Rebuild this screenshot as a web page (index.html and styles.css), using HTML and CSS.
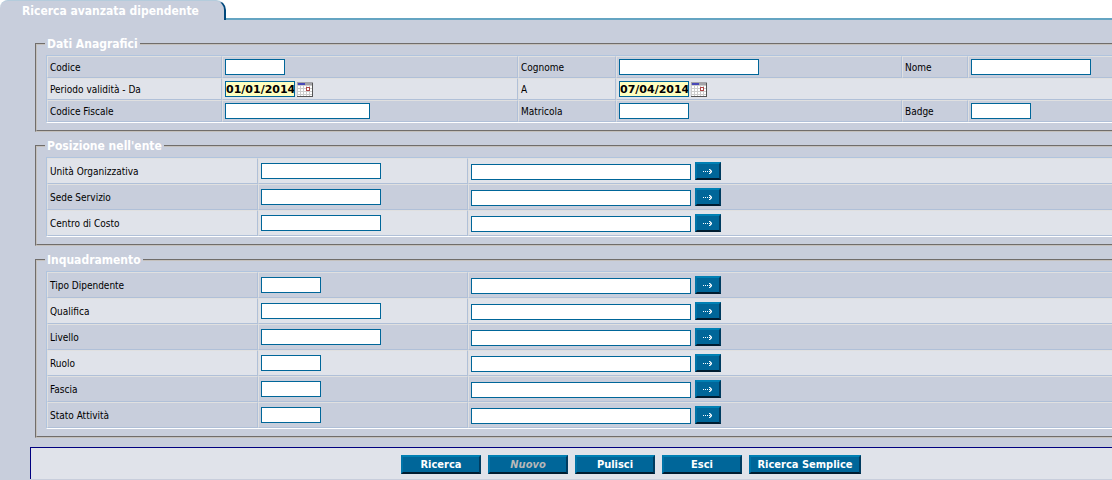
FILE: index.html
```
<!DOCTYPE html>
<html lang="it">
<head>
<meta charset="utf-8">
<title>Ricerca avanzata dipendente</title>
<link rel="stylesheet" href="styles.css">
</head>
<body>
<svg class="symbols" aria-hidden="true">
  <symbol id="arrow" viewBox="0 0 10 5">
    <path d="M0 2h1v1h-1zM2 2h1v1h-1zM4 2h1v1h-1zM6 0h1v1h-1zM7 1h1v1h-1zM6 2h1v1h-1zM8 2h1v1h-1zM7 3h1v1h-1zM6 4h1v1h-1z" fill="#fff" shape-rendering="crispEdges"/>
    <path d="M7 0h1v1h-1zM8 1h1v1h-1zM7 2h1v1h-1zM8 3h1v1h-1zM7 4h1v1h-1z" fill="#8cbcd4" shape-rendering="crispEdges"/>
  </symbol>
  <symbol id="calendar" viewBox="0 0 16 15">
    <g shape-rendering="crispEdges">
      <path d="M0 0h16v15h-16z" fill="#fff"/>
      <path d="M0 3h15v1h-15zM0 6h15v1h-15zM0 9h15v1h-15zM0 12h15v1h-15zM0 3h1v11h-1zM3 3h1v11h-1zM6 3h1v11h-1zM9 3h1v11h-1zM12 3h1v11h-1z" fill="#ccc"/>
      <path d="M0 0h16v3h-16z" fill="#a3a3a8"/>
      <path d="M1 1h7v2h-7z" fill="#4848b8"/>
      <path d="M15 1h1v14h-1zM0 14h16v1h-16z" fill="#555"/>
      <path d="M9.500 5.500h3v3h-3z" fill="#fff" stroke="#b04848"/>
    </g>
  </symbol>
</svg>
<header class="tabs"><h1 class="tab">Ricerca avanzata dipendente</h1></header>
<form class="form">
  <fieldset class="group">
    <legend>Dati Anagrafici</legend>
    <table class="grid personal">
      <colgroup><col class="p1"><col class="p2"><col class="p3"><col class="p4"><col class="p5"><col></colgroup>
      <tr>
        <td><label for="codice">Codice</label></td><td><input class="field w60" id="codice"></td>
        <td><label for="cognome">Cognome</label></td><td><input class="field w140" id="cognome"></td>
        <td><label for="nome">Nome</label></td><td><input class="field w120" id="nome"></td>
      </tr>
      <tr class="light">
        <td><label for="da">Periodo validità - Da</label></td>
        <td><div class="line"><input class="field date w70" id="da" value="01/01/2014"><button type="button" class="pick" aria-label="Calendario"><svg><use href="#calendar"/></svg></button></div></td>
        <td><label for="al">A</label></td>
        <td colspan="3"><div class="line"><input class="field date w70" id="al" value="07/04/2014"><button type="button" class="pick" aria-label="Calendario"><svg><use href="#calendar"/></svg></button></div></td>
      </tr>
      <tr>
        <td><label for="cf">Codice Fiscale</label></td><td><input class="field w145" id="cf"></td>
        <td><label for="matricola">Matricola</label></td><td><input class="field w70" id="matricola"></td>
        <td><label for="badge">Badge</label></td><td><input class="field w60" id="badge"></td>
      </tr>
    </table>
  </fieldset>

  <fieldset class="group">
    <legend>Posizione nell'ente</legend>
    <table class="grid lookup">
      <colgroup><col class="l1"><col class="l2"><col></colgroup>
      <tr class="light">
        <td><label for="uo">Unità Organizzativa</label></td><td><input class="field w120" id="uo"></td>
        <td><div class="line"><input class="field w220" aria-label="Descrizione unità"><button type="button" class="btn go" aria-label="Cerca"><svg><use href="#arrow"/></svg></button></div></td>
      </tr>
      <tr>
        <td><label for="sede">Sede Servizio</label></td><td><input class="field w120" id="sede"></td>
        <td><div class="line"><input class="field w220" aria-label="Descrizione sede"><button type="button" class="btn go" aria-label="Cerca"><svg><use href="#arrow"/></svg></button></div></td>
      </tr>
      <tr class="light">
        <td><label for="cdc">Centro di Costo</label></td><td><input class="field w120" id="cdc"></td>
        <td><div class="line"><input class="field w220" aria-label="Descrizione centro"><button type="button" class="btn go" aria-label="Cerca"><svg><use href="#arrow"/></svg></button></div></td>
      </tr>
    </table>
  </fieldset>

  <fieldset class="group">
    <legend>Inquadramento</legend>
    <table class="grid lookup">
      <colgroup><col class="l1"><col class="l2"><col></colgroup>
      <tr>
        <td><label for="tipo">Tipo Dipendente</label></td><td><input class="field w60" id="tipo"></td>
        <td><div class="line"><input class="field w220" aria-label="Descrizione tipo"><button type="button" class="btn go" aria-label="Cerca"><svg><use href="#arrow"/></svg></button></div></td>
      </tr>
      <tr class="light">
        <td><label for="qualifica">Qualifica</label></td><td><input class="field w120" id="qualifica"></td>
        <td><div class="line"><input class="field w220" aria-label="Descrizione qualifica"><button type="button" class="btn go" aria-label="Cerca"><svg><use href="#arrow"/></svg></button></div></td>
      </tr>
      <tr>
        <td><label for="livello">Livello</label></td><td><input class="field w120" id="livello"></td>
        <td><div class="line"><input class="field w220" aria-label="Descrizione livello"><button type="button" class="btn go" aria-label="Cerca"><svg><use href="#arrow"/></svg></button></div></td>
      </tr>
      <tr class="light">
        <td><label for="ruolo">Ruolo</label></td><td><input class="field w60" id="ruolo"></td>
        <td><div class="line"><input class="field w220" aria-label="Descrizione ruolo"><button type="button" class="btn go" aria-label="Cerca"><svg><use href="#arrow"/></svg></button></div></td>
      </tr>
      <tr>
        <td><label for="fascia">Fascia</label></td><td><input class="field w60" id="fascia"></td>
        <td><div class="line"><input class="field w220" aria-label="Descrizione fascia"><button type="button" class="btn go" aria-label="Cerca"><svg><use href="#arrow"/></svg></button></div></td>
      </tr>
      <tr>
        <td><label for="stato">Stato Attività</label></td><td><input class="field w60" id="stato"></td>
        <td><div class="line"><input class="field w220" aria-label="Descrizione stato"><button type="button" class="btn go" aria-label="Cerca"><svg><use href="#arrow"/></svg></button></div></td>
      </tr>
    </table>
  </fieldset>

  <div class="actions">
    <button type="button" class="btn">Ricerca</button>
    <button type="button" class="btn" disabled>Nuovo</button>
    <button type="button" class="btn">Pulisci</button>
    <button type="button" class="btn">Esci</button>
    <button type="button" class="btn wide">Ricerca Semplice</button>
  </div>
</form>
</body>
</html>
```
FILE: styles.css
```
* { box-sizing: border-box; }
html { background: #c8cedc; }
body {
  margin: 0;
  background: #c8cedc;
  color: #000;
  font: 10px/14px "DejaVu Sans Condensed", "DejaVu Sans", sans-serif;
}
.symbols { display: none; }

.tabs {
  display: flex;
  height: 20px;
  background: #fff;
  border-bottom: 2px solid #64a4c2;
}
.tab {
  width: 226px;
  height: 20px;
  margin: 0;
  padding-left: 22px;
  background: #c8cedc;
  border-right: 2px solid #00487c;
  border-top: 1px solid #b4ccdc;
  border-radius: 8px 10px 0 0;
  color: #fff;
  font: bold 12px/20px "DejaVu Sans Condensed", "DejaVu Sans", sans-serif;
}

.form { padding: 16px 0 0 30px; }

/* Groups are open on the right and run to the window's edge. */
.group {
  min-width: 0;
  margin: 0 0 6px 5px;
  padding: 3px 0 7px 9px;
  border: 2px groove #c4c0bc;
  border-right: 0;
}
.group legend {
  margin-left: -1px;
  padding: 0 2px;
  color: #fff;
  font: bold 12px/16px "DejaVu Sans Condensed", "DejaVu Sans", sans-serif;
}

.grid {
  width: 100%;
  table-layout: fixed;
  border-collapse: separate;
  border-spacing: 0;
  border: 1px solid;
  border-color: #b0c4de #fff #fff #b0c4de;
  border-right: 0;
}
.grid td {
  height: 26px;
  padding: 0 2px;
  border: 1px solid;
  border-color: #e0e0e0 #b0c0d8 #b0c0d8 #e0e0e0;
  vertical-align: middle;
}
.grid td:last-child { border-right: 0; }
.personal td { height: 22px; }
.grid .light td { background: #e0e3ea; }
.p1 { width: 175px; }
.p2 { width: 296px; }
.p3 { width: 98px; }
.p4 { width: 286px; }
.p5 { width: 66px; }
.l1 { width: 211px; }
.l2 { width: 210px; }
label { display: block; padding-top: 2px; }

.line { display: flex; align-items: flex-end; gap: 4px; }
.personal .line { align-items: center; gap: 2px; }
.field {
  display: block;
  height: 16px;
  padding: 0;
  background: #fff;
  border: 1px solid #006699;
  border-radius: 0;
  font: 11px/14px "DejaVu Sans", sans-serif;
}
.date { background: #ffffc0; font-weight: bold; }
.w60 { width: 60px; }
.w70 { width: 70px; }
.w120 { width: 120px; }
.w140 { width: 140px; }
.w145 { width: 145px; }
.w220 { width: 220px; }

.pick { padding: 0; border: 0; background: none; line-height: 0; }
.pick svg { width: 16px; height: 15px; }

.btn {
  width: 80px;
  height: 19px;
  padding: 0;
  background: #006699;
  border: 2px solid;
  border-color: #0080b4 #003c60 #001c30 #0074a8;
  color: #fff;
  font: bold 11px/15px "DejaVu Sans Condensed", "DejaVu Sans", sans-serif;
}
.btn:disabled { color: #b8b8b8; font-style: italic; }
.wide { width: 112px; }
.go { display: grid; place-items: center; width: 26px; height: 18px; }
.go svg { width: 10px; height: 5px; }

.actions {
  display: flex;
  justify-content: center;
  gap: 7px;
  margin-top: 9px;
  padding: 7px 0 5px 119px;
  background: #e0e3ea;
  border: 1px solid #000080;
  border-width: 1px 0 0 1px;
}
```
